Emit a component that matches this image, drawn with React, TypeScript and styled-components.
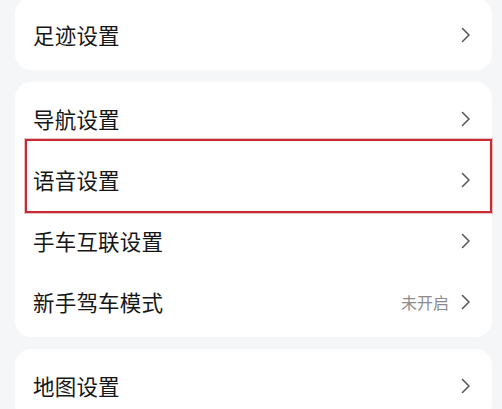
import styled, { createGlobalStyle } from "styled-components";

/* Settings list: three grouped cards, one row outlined in red. */

const Global = createGlobalStyle`
  html, body {
    margin: 0;
    padding: 0;
    background: #f5f6f8;
  }
  body {
    font-family: "Noto Sans CJK SC", "Noto Sans", sans-serif;
    overflow: hidden;
  }
`;

const Page = styled.div`
  display: flex;
  flex-direction: column;
  gap: 12px;
  padding: 0 10px 0 15px;
  margin-top: -2px;
`;

const Card = styled.div`
  background: #ffffff;
  border-radius: 16px;
  padding: 6px 0 5px;
  display: flex;
  flex-direction: column;
`;

const Row = styled.div<{ $marked?: boolean }>`
  position: relative;
  height: 61px;
  display: flex;
  align-items: center;
  padding: 0 22px 0 18px;

  ${({ $marked }) =>
    $marked &&
    `
    &::after {
      content: "";
      position: absolute;
      left: 10px;
      right: 0;
      top: -10px;
      bottom: -3px;
      border: 2px solid #c82a31;
      box-shadow: 0 0 0 1px rgba(200, 42, 49, 0.3);
      pointer-events: none;
    }
  `}
`;

const Label = styled.span`
  flex: 1;
  font-size: 21.5px;
  color: #161616;
  letter-spacing: 0.2px;
`;

const Value = styled.span`
  font-size: 16px;
  color: #8c8c8c;
  margin-right: 12px;
`;

const Chevron = () => (
  <svg width="9" height="16" viewBox="0 0 9 16" fill="none">
    <polyline
      points="1.5,1.5 8,8 1.5,14.5"
      stroke="#555555"
      strokeWidth="1.5"
      strokeLinecap="round"
      strokeLinejoin="round"
    />
  </svg>
);

type Item = { label: string; value?: string; marked?: boolean };

const groups: Item[][] = [
  [{ label: "足迹设置" }],
  [
    { label: "导航设置" },
    { label: "语音设置", marked: true },
    { label: "手车互联设置" },
    { label: "新手驾车模式", value: "未开启" },
  ],
  [{ label: "地图设置" }],
];

export default function App() {
  return (
    <>
      <Global />
      <Page>
        {groups.map((items, i) => (
          <Card key={i}>
            {items.map((it) => (
              <Row key={it.label} $marked={it.marked}>
                <Label>{it.label}</Label>
                {it.value ? <Value>{it.value}</Value> : null}
                <Chevron />
              </Row>
            ))}
          </Card>
        ))}
      </Page>
    </>
  );
}
